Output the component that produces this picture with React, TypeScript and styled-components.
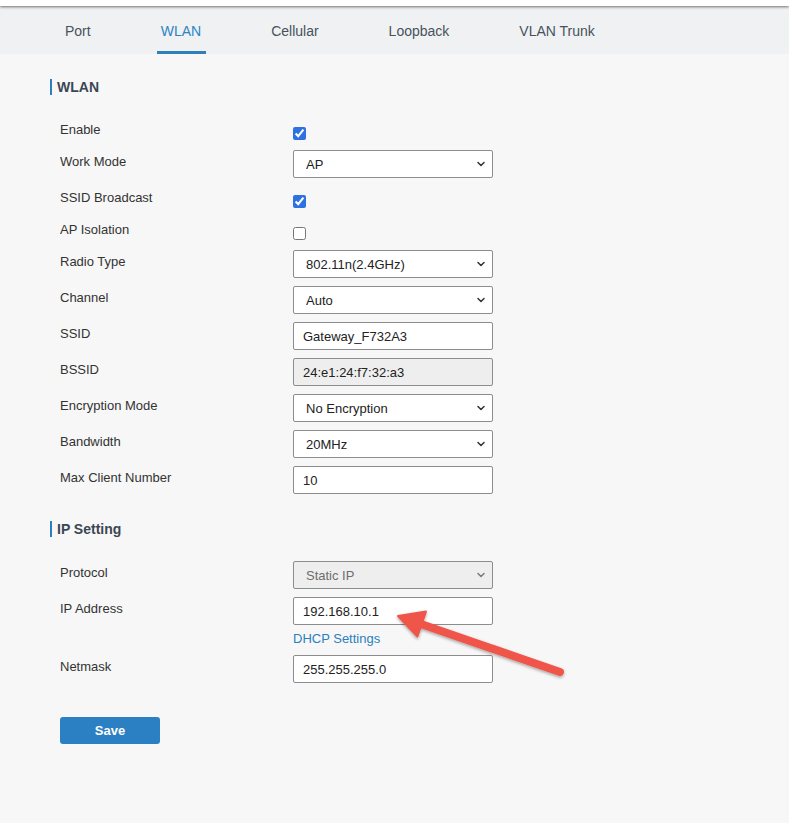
import React, { FC } from 'react';
import styled, { createGlobalStyle } from 'styled-components';
import { ChevronDown } from 'lucide-react';

const GlobalStyle = createGlobalStyle`
  html, body {
    margin: 0;
    padding: 0;
    background: #f7f7f7;
    font-family: "Liberation Sans", Arial, Helvetica, sans-serif;
  }
  * {
    box-sizing: border-box;
  }
`;

const Page = styled.div`
  position: relative;
  min-height: 823px;
  background: #f7f7f7;
`;

const TopStrip = styled.div`
  position: relative;
  z-index: 1;
  height: 6px;
  background: #ffffff;
  box-shadow: 0 1px 3px rgba(0, 0, 0, 0.55);
`;

const TabBar = styled.nav`
  display: flex;
  gap: 61px;
  height: 48px;
  padding-left: 61px;
  background: #eff1f3;
`;

const Tab = styled.div<{ $active?: boolean }>`
  display: flex;
  align-items: center;
  padding: 5px 5px 0 4px;
  border-bottom: 3px solid ${(p) => (p.$active ? '#2f7fb8' : 'transparent')};
  font-size: 14px;
  color: ${(p) => (p.$active ? '#2c84c4' : '#48515c')};
`;

const Content = styled.div`
  padding-left: 50px;
`;

const Heading = styled.h2<{ $top: number; $bottom: number }>`
  margin: ${(p) => p.$top}px 0 ${(p) => p.$bottom}px;
  padding-left: 5px;
  border-left: 2px solid #2c7fbf;
  font-size: 14px;
  line-height: 16px;
  font-weight: bold;
  color: #3b4754;
`;

const Row = styled.div<{ $check?: boolean }>`
  display: flex;
  align-items: flex-start;
  padding-left: 10px;
  margin-bottom: 8px;
  min-height: ${(p) => (p.$check ? 24 : 28)}px;
`;

const Label = styled.div`
  width: 233px;
  padding-top: 3px;
  font-size: 13px;
  line-height: 18px;
  color: #333333;
`;

const FieldColumn = styled.div`
  display: flex;
  flex-direction: column;
`;

const Check = styled.input.attrs({ type: 'checkbox' })`
  width: 13px;
  height: 13px;
  margin: 9px 0 0 0;
  accent-color: #2d72e0;
`;

const SelectWrap = styled.div`
  position: relative;
  width: 200px;
  height: 28px;
`;

const Select = styled.select`
  appearance: none;
  width: 200px;
  height: 28px;
  padding: 0 24px 0 12px;
  border: 1px solid #8d8d8d;
  border-radius: 2px;
  background: ${(p) => (p.disabled ? '#eeeeee' : '#ffffff')};
  font-family: inherit;
  font-size: 13px;
  color: ${(p) => (p.disabled ? '#6d6d6d' : '#222222')};
  opacity: 1;
`;

const Chevron = styled(ChevronDown)<{ $muted?: boolean }>`
  position: absolute;
  right: 6px;
  top: 8px;
  color: ${(p) => (p.$muted ? '#7a7a7a' : '#333333')};
  pointer-events: none;
`;

const TextInput = styled.input`
  width: 200px;
  height: 28px;
  padding: 0 9px;
  border: 1px solid #8d8d8d;
  border-radius: 2px;
  background: ${(p) => (p.readOnly ? '#eeeeee' : '#ffffff')};
  font-family: inherit;
  font-size: 13px;
  color: #222222;
  outline: none;
`;

const Link = styled.a`
  margin-top: 6px;
  font-size: 13px;
  line-height: 16px;
  color: #2c7fbf;
  text-decoration: none;
`;

const SaveButton = styled.button`
  margin: 26px 0 0 10px;
  width: 100px;
  height: 27px;
  border: none;
  border-radius: 3px;
  background: #2a80c3;
  color: #ffffff;
  font-family: inherit;
  font-size: 13px;
  font-weight: bold;
`;

const ArrowLayer = styled.svg`
  position: absolute;
  left: 390px;
  top: 600px;
  overflow: visible;
  pointer-events: none;
`;

type SelectProps = { value: string; disabled?: boolean };

const Dropdown: FC<SelectProps> = ({ value, disabled }) => (
  <SelectWrap>
    <Select value={value} disabled={disabled} onChange={() => undefined}>
      <option>{value}</option>
    </Select>
    <Chevron size={12} strokeWidth={3} $muted={disabled} />
  </SelectWrap>
);

const tabs = ['Port', 'WLAN', 'Cellular', 'Loopback', 'VLAN Trunk'];

const App: FC = () => {
  return (
    <Page>
      <GlobalStyle />
      <TopStrip />
      <TabBar>
        {tabs.map((t) => (
          <Tab key={t} $active={t === 'WLAN'}>
            {t}
          </Tab>
        ))}
      </TabBar>
      <Content>
        <Heading $top={25} $bottom={23}>WLAN</Heading>
        <Row $check>
          <Label>Enable</Label>
          <Check defaultChecked />
        </Row>
        <Row>
          <Label>Work Mode</Label>
          <Dropdown value="AP" />
        </Row>
        <Row $check>
          <Label>SSID Broadcast</Label>
          <Check defaultChecked />
        </Row>
        <Row $check>
          <Label>AP Isolation</Label>
          <Check />
        </Row>
        <Row>
          <Label>Radio Type</Label>
          <Dropdown value="802.11n(2.4GHz)" />
        </Row>
        <Row>
          <Label>Channel</Label>
          <Dropdown value="Auto" />
        </Row>
        <Row>
          <Label>SSID</Label>
          <TextInput defaultValue="Gateway_F732A3" />
        </Row>
        <Row>
          <Label>BSSID</Label>
          <TextInput readOnly defaultValue="24:e1:24:f7:32:a3" />
        </Row>
        <Row>
          <Label>Encryption Mode</Label>
          <Dropdown value="No Encryption" />
        </Row>
        <Row>
          <Label>Bandwidth</Label>
          <Dropdown value="20MHz" />
        </Row>
        <Row>
          <Label>Max Client Number</Label>
          <TextInput defaultValue="10" />
        </Row>

        <Heading $top={27} $bottom={24}>IP Setting</Heading>
        <Row>
          <Label>Protocol</Label>
          <Dropdown value="Static IP" disabled />
        </Row>
        <Row>
          <Label>IP Address</Label>
          <FieldColumn>
            <TextInput defaultValue="192.168.10.1" />
            <Link href="#">DHCP Settings</Link>
          </FieldColumn>
        </Row>
        <Row>
          <Label>Netmask</Label>
          <TextInput defaultValue="255.255.255.0" />
        </Row>
        <SaveButton>Save</SaveButton>
      </Content>

      {/* annotation arrow pointing at the IP address field */}
      <ArrowLayer width="185" height="85" viewBox="0 0 185 85">
        <defs>
          <filter id="arrowShadow" x="-20%" y="-40%" width="140%" height="180%">
            <feDropShadow dx="0" dy="1.5" stdDeviation="1.5" floodColor="#000" floodOpacity="0.35" />
          </filter>
        </defs>
        <g filter="url(#arrowShadow)" fill="#ef5548" stroke="#ef5548">
          <line x1="28" y1="23" x2="170" y2="72" strokeWidth="8" strokeLinecap="round" />
          <polygon points="8,16 36,11.5 27.4,36.5" strokeWidth="2" strokeLinejoin="round" />
        </g>
      </ArrowLayer>
    </Page>
  );
};

export default App;
